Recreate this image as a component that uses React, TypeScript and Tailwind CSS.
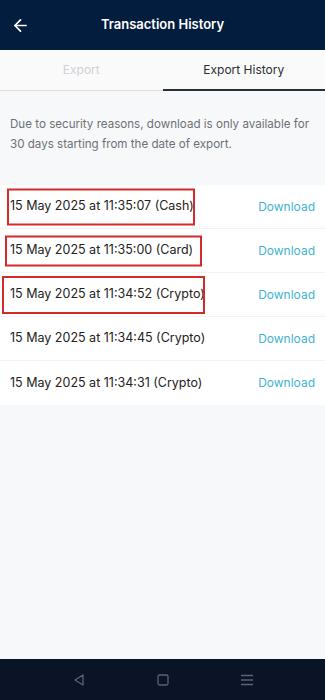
import { ArrowLeft } from "lucide-react";

const rows = [
  { label: "15 May 2025 at 11:35:07 (Cash)", box: "w-[188px] -left-[3px] h-[37px]" },
  { label: "15 May 2025 at 11:35:00 (Card)", box: "w-[197px] -left-[5px] h-[31px]" },
  { label: "15 May 2025 at 11:34:52 (Crypto)", box: "w-[203px] -left-[8px] h-[38px]" },
  { label: "15 May 2025 at 11:34:45 (Crypto)", box: "" },
  { label: "15 May 2025 at 11:34:31 (Crypto)", box: "" },
];

export default function App() {
  return (
    <div
      className="flex h-[700px] w-[325px] flex-col bg-[#f7f8fa] text-[#222]"
      style={{ fontFamily: "Inter, 'Noto Sans', sans-serif" }}
    >
      <header className="relative flex h-[50px] shrink-0 items-center justify-center bg-[#021d3e]">
        <ArrowLeft className="absolute left-[11px] h-[19px] w-[19px] text-white" strokeWidth={2.2} />
        <h1 className="text-[13px] font-semibold text-white">Transaction History</h1>
      </header>

      <div className="flex h-[41px] shrink-0 bg-[#fafafa]">
        <div className="flex flex-1 items-center justify-center border-b border-[#dedede] text-[12px] text-[#cfd2d6]">
          Export
        </div>
        <div className="flex flex-1 items-center justify-center border-b-2 border-[#2a2e35] text-[12px] text-[#2a2e35]">
          Export History
        </div>
      </div>

      <p className="px-[10px] pt-[23px] text-[11.6px] leading-[20px] text-[#6d7176]">
        Due to security reasons, download is only available for 30 days starting from the date of export.
      </p>

      <ul className="mt-[31px] bg-white">
        {rows.map((r, i) => (
          <li
            key={i}
            className="flex h-[44px] items-center justify-between border-b border-[#f1f2f4] pl-[10px] pr-[10px] last:border-b-0"
          >
            <span className="relative text-[12.5px] text-[#222]">
              {r.label}
              {r.box && (
                <span className={`absolute top-1/2 -translate-y-1/2 border-2 border-[#d42a2a] ${r.box}`} />
              )}
            </span>
            <span className="text-[12px] text-[#3fb3d1]">Download</span>
          </li>
        ))}
      </ul>

      <div className="flex-1" />

      <nav className="flex h-[41px] shrink-0 items-center justify-center gap-[70px] bg-[#0b1426]">
        <svg width="14" height="14" viewBox="0 0 14 14" fill="none" stroke="#5a6273" strokeWidth="1.3">
          <path d="M11 2 L3 7 L11 12 Z" strokeLinejoin="round" />
        </svg>
        <svg width="14" height="14" viewBox="0 0 14 14" fill="none" stroke="#5a6273" strokeWidth="1.3">
          <rect x="2" y="2" width="10" height="10" rx="1.5" />
        </svg>
        <svg width="14" height="14" viewBox="0 0 14 14" fill="none" stroke="#5a6273" strokeWidth="1.3">
          <path d="M1 2.5 H13 M1 7 H13 M1 11.5 H13" />
        </svg>
      </nav>
    </div>
  );
}
